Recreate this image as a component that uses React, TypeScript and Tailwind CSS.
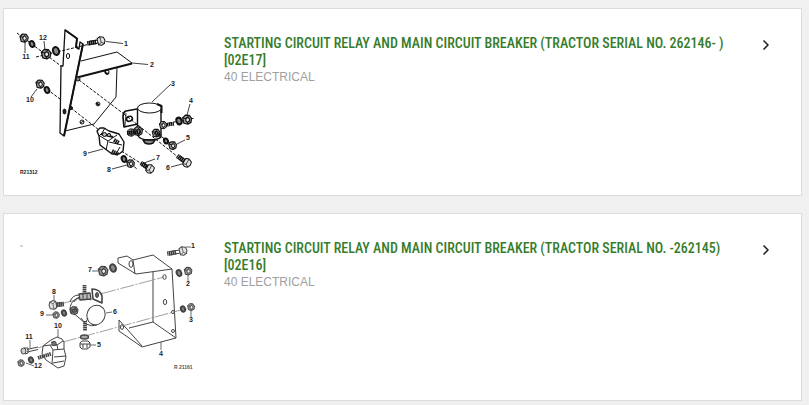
import { ReactNode } from "react";
import { ChevronRight } from "lucide-react";

type Point = { x: number; y: number };

function Nut({ x, y, r = 4 }: Point & { r?: number }) {
  return (
    <g transform={`translate(${x} ${y}) scale(${r / 4})`}>
      <path d="M-4-1.5-1.5-4 2-3.8 4.2-1 3.6 2.6.8 4.2-2.8 3.4Z" fill="#999" strokeWidth="1.1" />
      <path d="M-4-1.5-1-.8M-1-.8 2-3.8M-1-.8.8 4.2" strokeWidth="0.9" />
      <ellipse cx="0.6" cy="0.3" rx="1.7" ry="2" fill="#eee" />
    </g>
  );
}

function Washer({ x, y, r = 3 }: Point & { r?: number }) {
  return (
    <ellipse cx={x} cy={y} rx={r * 0.75} ry={r} fill="#888" strokeWidth="2" transform={`rotate(-20 ${x} ${y})`} />
  );
}

// x, y is the centre of the head, the thread points along the angle
function Bolt({ x, y, angle, length = 12 }: Point & { angle: number; length?: number }) {
  return (
    <g transform={`translate(${x} ${y}) rotate(${angle})`}>
      <path d={`M3-1.6H${length}M3 1.6H${length}`} />
      <path d={`M${length - 7} 0H${length + 2}`} strokeWidth="4.6" strokeDasharray="1.6 0.4" />
      <path d="M-3-3 0-4.4 3-3.4 3.6 2.8 1 4.4-3 3.4-4 0Z" fill="#e4e4e4" />
      <path d="M-3-3 0-1.4 3-3.4M0-1.4.6 4.2" strokeWidth="0.7" />
    </g>
  );
}

function Stud({ x, y, angle, length = 8 }: Point & { angle: number; length?: number }) {
  return (
    <g transform={`translate(${x} ${y}) rotate(${angle})`}>
      <path d={`M0 0H${length}`} strokeWidth="3.8" strokeDasharray="1.5 0.5" />
    </g>
  );
}

function Labels({ items }: { items: [string, number, number][] }) {
  return (
    <g fill="#222" stroke="none" fontSize="7" fontWeight="700" textAnchor="middle" fontFamily="Liberation Sans, sans-serif">
      {items.map(([text, x, y]) => (
        <text key={text} x={x} y={y + 2}>
          {text}
        </text>
      ))}
    </g>
  );
}

function RelayDiagramLate() {
  return (
    <svg viewBox="14 20 186 166" className="block w-full" fill="none" stroke="#111" strokeWidth="1" strokeLinejoin="round" role="img" aria-label="Relay and breaker parts">
      {/* mounting bracket */}
      <path d="M81 61 117 52 132 63" />
      <path d="M77 77.5 132 63.5" strokeWidth="1.9" />
      <path d="M117 67 116 97 94 124 65 131" />
      <path d="M65 30 77 38.5 76 47 79 49 80 42 83 44 64 136 60 133 61 66 63 66Z" fill="#fff" strokeWidth="1.3" />
      <path d="M65 30 77 38.5 76 47 79 49M83 44 64 136" strokeWidth="2" />
      <ellipse cx="68" cy="56" rx="1.6" ry="2.6" />
      <ellipse cx="64.5" cy="111.5" rx="1.5" ry="2.5" fill="#222" />
      <circle cx="71" cy="108" r="1.5" fill="#222" />
      <circle cx="78" cy="79" r="2" fill="#888" />
      <ellipse cx="107" cy="72" rx="2" ry="2.4" />
      <path d="M105 71Q106 75 109 73M96 103 99 105" strokeWidth="1.7" />
      <circle cx="98" cy="104" r="1.9" />
      <circle cx="82" cy="122" r="2" />
      <path d="M80 123 84 121" />

      <path d="M17 33 61 66M36 57 90 44M40 84 60 99M71 108 99 130M79 80 124 114M110 144 150 169M124 158 137 169M158 134 174 146M164 124 195 118" strokeWidth="1" strokeDasharray="3 1.5" />
      <path d="M25 53V41M44 41 45 50M31 97 37 89M106 41.5 123 43.5M132 63 148 64.5M171 84 152 102M190 104 187 115M177 144 185 140M171 167 182 164M144 163 155 159M112 169 127 165M88 153 103 149" strokeWidth="0.8" />

      <Nut x={24} y={38} />
      <Washer x={32} y={44} />
      <Nut x={46} y={54} r={4.6} />
      <Washer x={56} y={51} r={4} />
      <Bolt x={101} y={41} angle={170} />
      <Nut x={40} y={84} />
      <Washer x={47} y={90} />

      {/* relay */}
      <path d="M137 109 126 111Q123 112 123 117L124 127 138 124" fill="#fff" strokeWidth="1.7" />
      <path d="M126 113 125 126" strokeWidth="0.8" />
      <ellipse cx="129.5" cy="119" rx="3" ry="2.4" strokeWidth="1.6" transform="rotate(-20 129 119)" />
      <path d="M137.5 108V135Q140 140 149 140T161 137V107" fill="#fff" strokeWidth="1.4" />
      <ellipse cx="149.5" cy="108" rx="12" ry="5" fill="#fff" />
      <path d="M157 104 161.5 106V113" strokeWidth="2" />
      <path d="M143 140H155L153 143Q149 145 145 143Z" fill="#888" strokeWidth="1.4" />
      <path d="M124 114 178 157" strokeWidth="1" strokeDasharray="3 1.5" />
      <Nut x={131} y={132.5} r={3.6} />
      <Nut x={138} y={131} r={4.2} />
      <Stud x={127} y={133} angle={-5} length={13} />
      <Nut x={156} y={133} r={3.8} />
      <Stud x={155} y={132} angle={35} length={7} />
      <Stud x={165} y={125} angle={-8} length={9} />
      <Nut x={163} y={125} r={3.6} />
      <Washer x={179} y={121} r={3.4} />
      <Nut x={187} y={119.5} r={4.4} />
      <Washer x={166} y={141} r={2.6} />
      <Nut x={172.5} y={145.5} r={3.8} />
      <Bolt x={187} y={163} angle={216} length={10} />

      {/* circuit breaker */}
      <path d="M97 131 100 128 104 128 109 131 119 134 124 142 123 151 119 154 112 154 100 145 99 136Z" fill="#fff" strokeWidth="1.4" />
      <path d="M100 136 108 141 106 150M108 141 117 135M109 142 122 145M120 147 116 154M99 136 102 133 105 128" />
      <path d="M101 134 113 137" strokeWidth="2" />
      <circle cx="104.5" cy="134.5" r="2" fill="#bbb" />
      <circle cx="109" cy="135" r="1.6" fill="#bbb" />
      <Stud x={114} y={140} angle={30} length={6} />
      <Stud x={112} y={151} angle={30} length={7} />
      <Washer x={124} y={159} />
      <Nut x={130.5} y={163.5} r={3.7} />
      <Bolt x={150} y={169} angle={213} length={9} />

      <Labels
        items={[
          ["1", 126, 44],
          ["2", 152, 65],
          ["3", 173, 84],
          ["4", 191, 101],
          ["5", 188, 138],
          ["6", 168, 168],
          ["7", 158, 158],
          ["8", 109, 170],
          ["9", 85, 154],
          ["10", 30, 100],
          ["11", 26, 57],
          ["12", 43, 38],
        ]}
      />
      <text x="20" y="174" fill="#222" stroke="none" fontSize="5" fontWeight="700" fontFamily="Liberation Sans, sans-serif">
        R21312
      </text>
    </svg>
  );
}

function RelayDiagramEarly() {
  return (
    <svg viewBox="14 225 186 166" className="block w-full" fill="none" stroke="#444" strokeWidth="1" strokeLinejoin="round" role="img" aria-label="Relay and breaker parts">
      <path d="M20 246H23" stroke="#aaa" />

      {/* mounting bracket */}
      <path d="M118 258 127 256 133 260 153 255 172 269 136 274 118 263ZM133 260 135 274" />
      <path d="M153 272V322L176 338 172 269M153 322 129 328M119 320V331L142 347 176 338M119 320 142 346" />
      <ellipse cx="131" cy="264" rx="2" ry="3.4" />
      <ellipse cx="164.5" cy="277" rx="1.7" ry="2.3" />
      <ellipse cx="165" cy="302" rx="1.7" ry="2.6" />
      <circle cx="173" cy="312" r="1.5" />
      <circle cx="173" cy="331" r="1.5" />
      <ellipse cx="122" cy="327" rx="1.6" ry="2.4" />

      <path d="M102 293.5 164 277M63 342 192 307M38 348 54 343M60 304 88 297" stroke="#777" strokeWidth="0.7" strokeDasharray="14 1.5 2 1.5" />
      <path d="M92 271H98M54 295V301M46 315H53M106 313 112 312M90 345H96M58 329V337M30 340V348M26 363 34 366M186 247H191M188 275V281M191 311V317M161 342V350" strokeWidth="0.8" />

      <Bolt x={183} y={251} angle={170} length={14} />
      <Washer x={179} y={273} />
      <Nut x={188} y={271} r={3.7} />
      <Washer x={183} y={309} r={2.7} />
      <Nut x={191} y={307} r={3.4} />
      <Nut x={103} y={271} r={4.6} />
      <Washer x={113} y={268} r={3.8} />

      {/* relay */}
      <path d="M92 289Q100 289 102 296L102 303 93 299Z" fill="#fff" strokeWidth="1.6" />
      <ellipse cx="97" cy="295" rx="1.5" ry="2.5" fill="#666" />
      <path d="M91 300Q84 296 76 299 70 302 70 310L86 324Q92 327 97 325M70 302Q72 295 79 295M74 302Q76 297 82 297" />
      <ellipse cx="96" cy="315" rx="9" ry="10" fill="#fff" transform="rotate(25 96 315)" />
      <Stud x={84.5} y={285} angle={90} length={11} />
      <path d="M79 294 90 293 91 299 80 300Z" fill="#bbb" strokeWidth="1.3" />
      <path d="M83 294V300M87 293V299" />
      <Nut x={74} y={310.5} r={3.8} />
      <Stud x={70} y={312} angle={-18} length={8} />
      <path d="M81 318 84 322M88 318 86 322" />
      <Stud x={85} y={321} angle={90} length={10} />
      <ellipse cx="84.5" cy="337" rx="4" ry="2" fill="#aaa" strokeWidth="1.4" />
      <path d="M80 343 82 341H88L90 343V347L87 349H82L80 347ZM80 344H90M83 344V348M87 344V348" />
      <Bolt x={53} y={305} angle={-5} length={9} />
      <Nut x={56} y={315} r={3.2} />
      <Washer x={64} y={313} r={2.7} />

      {/* circuit breaker */}
      <path d="M51 340 57 337 62 339 64 342 64 349 66 357 64 366 58 368 52 364 46 360 42 354 43 346Z" fill="#fff" />
      <path d="M51 342 57 345 63 341M43 346 50 345 53 350 52 364M53 350 64 349M54 357 66 356M53 363 64 361M50 345 57 345 58 350" />
      <circle cx="54" cy="343.5" r="2.2" fill="#777" />
      <Stud x={38} y={358} angle={-18} length={14} />
      <path d="M27 349.5 38 347M27 352 38 349.5" />
      <ellipse cx="23.5" cy="351" rx="2.5" ry="3" fill="#ccc" />
      <path d="M24 348 28 348V353L25 354" />
      <Nut x={21} y={363} r={3.2} />
      <Washer x={31} y={360} r={2.7} />

      <Labels
        items={[
          ["1", 193, 246],
          ["2", 188, 284],
          ["3", 191, 320],
          ["4", 161, 354],
          ["5", 99, 345],
          ["6", 115, 312],
          ["7", 90, 270],
          ["8", 54, 292],
          ["9", 42, 314],
          ["10", 58, 326],
          ["11", 29, 337],
          ["12", 38, 366],
        ]}
      />
      <text x="174" y="369" fill="#555" stroke="none" fontSize="5" fontWeight="700" fontFamily="Liberation Sans, sans-serif">
        R 21161
      </text>
    </svg>
  );
}

const results: { title: string; group: string; diagram: ReactNode }[] = [
  {
    title: "STARTING CIRCUIT RELAY AND MAIN CIRCUIT BREAKER (TRACTOR SERIAL NO. 262146- ) [02E17]",
    group: "40 ELECTRICAL",
    diagram: <RelayDiagramLate />,
  },
  {
    title: "STARTING CIRCUIT RELAY AND MAIN CIRCUIT BREAKER (TRACTOR SERIAL NO. -262145) [02E16]",
    group: "40 ELECTRICAL",
    diagram: <RelayDiagramEarly />,
  },
];

export default function App() {
  return (
    <main className="flex min-h-screen flex-col gap-[17px] bg-[#f0f0f0] pt-2 pr-[7px] pb-1 pl-[3px]">
      {results.map((item) => (
        <article key={item.title} className="flex items-start border border-[#dcdcdc] bg-white pt-[11px] pr-[27px] pb-[9px] pl-2.5">
          <div className="w-[186px] shrink-0">{item.diagram}</div>
          <div className="min-w-0 flex-1 pt-[15px] pr-2 pl-6">
            <h2 className="font-['Roboto_Condensed',Roboto,sans-serif] text-[14px] leading-[17px] font-medium text-[#367c2b]">
              <a href="#">{item.title}</a>
            </h2>
            <p className="font-['Liberation_Sans',sans-serif] text-[12px] leading-[17px] text-[#a0a0a0]">{item.group}</p>
          </div>
          <button type="button" aria-label="Open" className="mt-[17px] shrink-0 text-[#222]">
            <ChevronRight size={16} strokeWidth={2.5} />
          </button>
        </article>
      ))}
    </main>
  );
}
